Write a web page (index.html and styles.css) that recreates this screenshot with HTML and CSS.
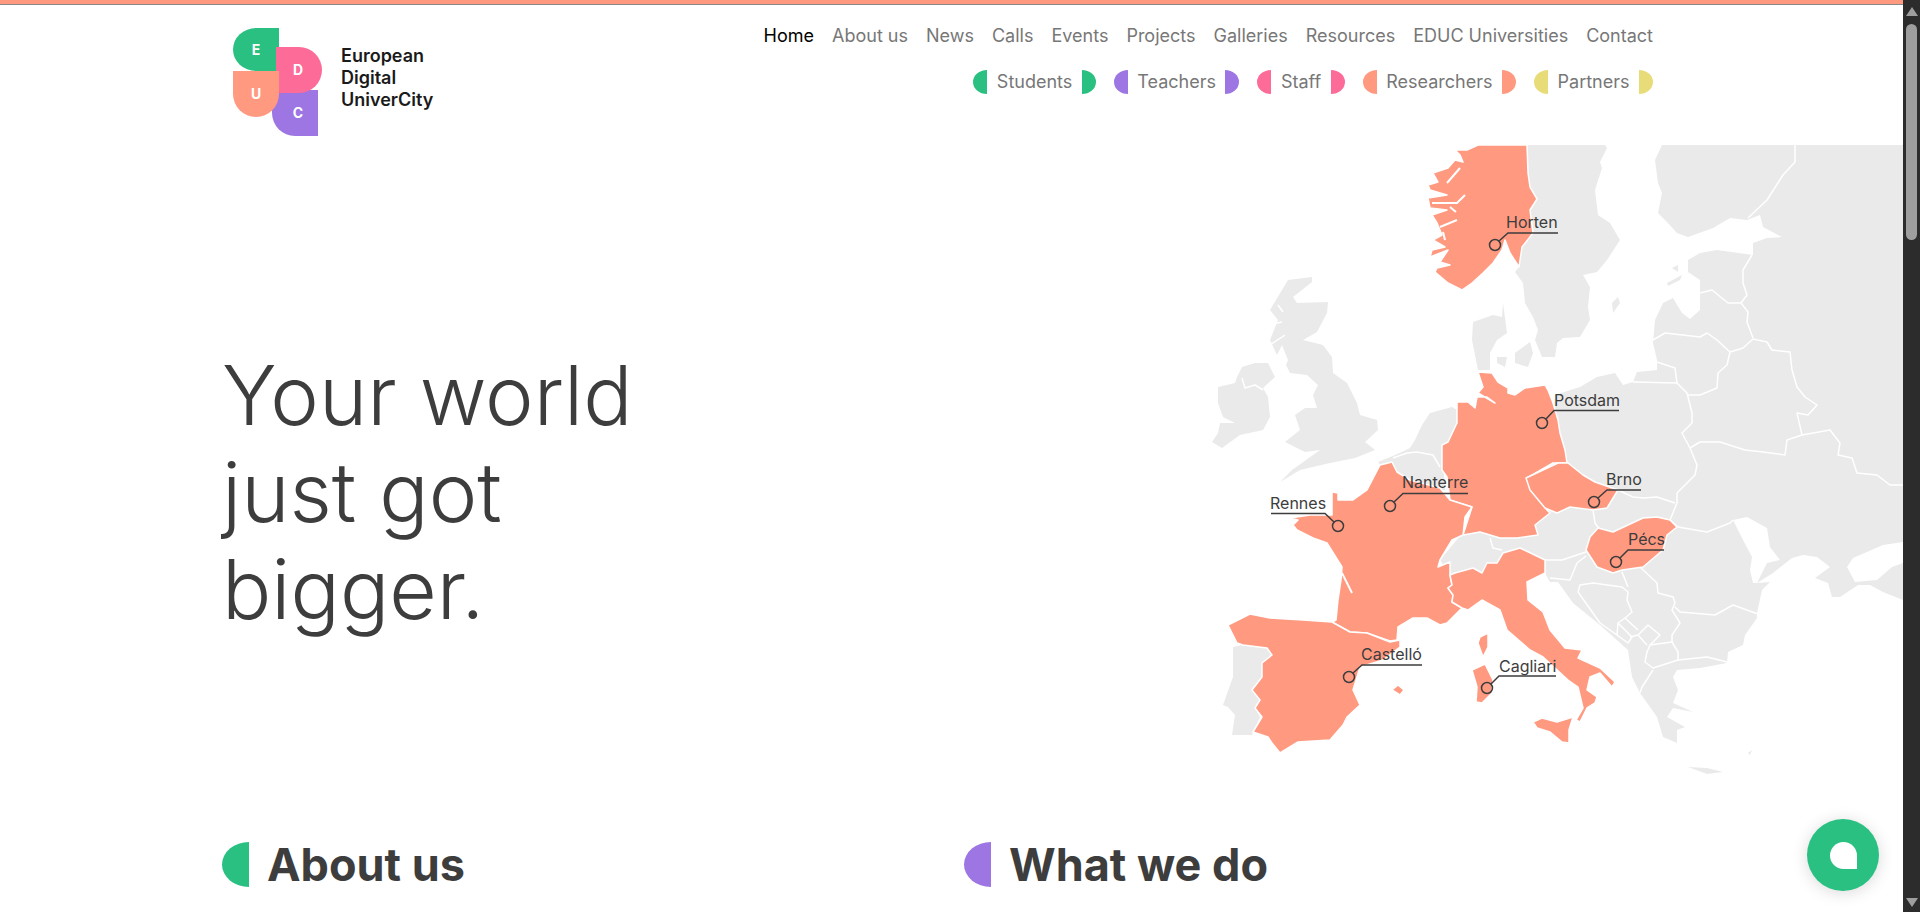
FILE: index.html
```html
<!DOCTYPE html>
<html lang="en">
<head>
    <meta charset="UTF-8">
    <meta name="viewport" content="width=device-width, initial-scale=1.0">
    <title>European Digital UniverCity</title>
    <link rel="stylesheet" href="styles.css">
</head>
<body>
    <div class="page">
        <main class="content">
            <header class="site-header">
                <a class="logo" href="#">
                    <svg class="logo-mark" viewBox="233 28 90 108" width="90" height="108">
                        <path class="green" d="M279 28H256a23 21.500 0 0 0 0 43H279Z"/>
                        <path class="purple" d="M272 90V113a23 23 0 0 0 23 23H318V90Z"/>
                        <path class="pink" d="M276 47H299a23 23 0 0 1 0 46H276Z"/>
                        <path class="salmon" d="M233 71V94a23 23 0 0 0 23 23a23 23 0 0 0 23 -23V71Z"/>
                        <text x="256" y="55">E</text>
                        <text x="298" y="75">D</text>
                        <text x="256" y="99">U</text>
                        <text x="298" y="118">C</text>
                    </svg>
                    <span class="logo-text">European<br>Digital<br>UniverCity</span>
                </a>
                <nav class="site-nav">
                    <ul class="main-menu">
                        <li><a class="active" href="#">Home</a></li>
                        <li><a href="#">About us</a></li>
                        <li><a href="#">News</a></li>
                        <li><a href="#">Calls</a></li>
                        <li><a href="#">Events</a></li>
                        <li><a href="#">Projects</a></li>
                        <li><a href="#">Galleries</a></li>
                        <li><a href="#">Resources</a></li>
                        <li><a href="#">EDUC Universities</a></li>
                        <li><a href="#">Contact</a></li>
                    </ul>
                    <ul class="audience-menu">
                        <li class="green"><a href="#">Students</a></li>
                        <li class="purple"><a href="#">Teachers</a></li>
                        <li class="pink"><a href="#">Staff</a></li>
                        <li class="salmon"><a href="#">Researchers</a></li>
                        <li class="yellow"><a href="#">Partners</a></li>
                    </ul>
                </nav>
            </header>

            <section class="hero">
                <h1>Your world<br>just got<br>bigger.</h1>
                <svg class="map" viewBox="1200 145 703 645" width="703" height="645">
                    <g class="land">
                        <!-- sweden -->
                        <path d="M1527 145L1528 173L1530 187L1537 199L1530 210L1533 233L1522 247L1519 267L1515 272L1523 283L1525 303L1533 317L1538 330L1535 340L1542 357L1555 357L1557 343L1563 338L1580 337L1590 320L1588 307L1590 287L1583 275L1597 272L1607 260L1620 240L1610 223L1598 215L1595 190L1602 168L1600 162L1607 148L1605 145Z"/>
                        <!-- finland, baltics, east and the balkans, one mass -->
                        <path d="M1662 145L1655 160L1658 183L1662 193L1658 213L1667 222L1677 233L1688 237L1713 228L1730 218L1747 220L1760 215L1763 227L1782 237L1767 238L1753 243L1753 255L1717 250L1700 253L1688 260L1688 272L1700 280L1700 310L1690 319L1682 313L1673 298L1663 303L1655 320L1653 343L1657 360L1657 370L1637 372L1633 382L1623 385L1615 373L1597 377L1580 387L1555 395L1550 470L1465 530L1440 560L1450 575L1500 580L1530 575L1545 573L1550 582L1558 582L1573 603L1600 625L1628 650L1632 677L1640 693L1650 707L1657 717L1663 737L1677 743L1677 730L1685 727L1667 717L1673 708L1693 712L1673 703L1678 690L1673 677L1677 670L1700 668L1727 663L1728 652L1743 645L1745 635L1757 618L1757 613L1762 590L1770 582L1757 583L1773 573L1792 558L1803 555L1817 557L1830 567L1815 578L1828 583L1832 597L1840 597L1858 585L1870 585L1883 592L1903 600V145Z"/>
                        <!-- gotland, saaremaa, hiiumaa -->
                        <path d="M1618 297L1620 303L1613 313L1612 303Z"/>
                        <path d="M1667 283L1682 275L1680 280L1668 286Z"/>
                        <path d="M1672 268L1678 265L1678 272Z"/>
                        <!-- denmark -->
                        <path d="M1503 303L1502 317L1493 315L1473 322L1472 340L1478 370L1490 370L1490 353L1497 340L1507 333Z"/>
                        <path d="M1515 353L1530 342L1533 353L1528 367L1515 363Z"/>
                        <path d="M1497 357L1507 357L1505 367L1497 363Z"/>
                        <!-- britain -->
                        <path d="M1288 280L1312 277L1312 282L1293 297L1297 303L1328 302L1327 313L1317 332L1303 340L1323 345L1332 357L1333 373L1347 383L1357 403L1360 415L1377 420L1378 430L1365 442L1375 450L1355 458L1330 463L1300 470L1280 482L1292 470L1320 450L1305 452L1285 442L1300 430L1295 415L1305 408L1317 408L1313 395L1318 385L1307 375L1290 373L1286 365L1288 360L1282 345L1277 355L1270 340L1278 320L1270 310L1282 290Z"/>
                        <!-- ireland -->
                        <path d="M1218 387L1235 383L1237 377L1242 367L1255 363L1268 363L1275 377L1263 388L1268 397L1270 417L1263 430L1240 435L1222 448L1212 442L1218 433L1220 423L1235 423L1223 417L1218 403Z"/>
                        <!-- benelux -->
                        <path d="M1430 413L1452 407L1457 410L1457 423L1448 442L1442 448L1445 490L1400 490L1378 462L1395 455L1410 448L1415 440L1422 425Z"/>
                        <!-- portugal -->
                        <path d="M1233 647L1243 645L1267 648L1272 655L1262 663L1262 677L1252 690L1260 700L1255 708L1260 717L1252 735L1232 735L1235 715L1228 707L1223 705L1233 677Z"/>
                        <!-- crete, rhodes -->
                        <path d="M1688 767L1707 768L1723 772L1707 774Z"/>
                        <path d="M1748 753L1752 750L1750 755Z"/>
                    </g>
                    <g class="sea">
                        <path d="M1733 520L1747 517L1767 528L1770 547L1780 560L1767 563L1757 583L1753 583L1750 570L1752 557L1743 540Z"/>
                        <path d="M1847 567L1853 558L1883 545L1903 542V563L1892 567L1877 580L1855 582Z"/>
                    </g>
                    <g class="borders">
                        <path d="M1795 145L1795 162L1783 175L1767 200L1748 218"/>
                        <path d="M1752 255L1743 270L1743 283L1747 295L1741 303"/>
                        <path d="M1700 293L1712 290L1728 303L1741 303L1748 312L1747 322L1753 338"/>
                        <path d="M1653 340L1665 333L1700 337L1707 333L1717 340L1730 352L1743 348L1753 339L1767 342L1772 350L1790 352L1792 370L1797 387L1805 397L1817 405L1808 415L1797 413L1802 435"/>
                        <path d="M1730 352L1727 365L1718 373L1717 388L1700 395L1688 395"/>
                        <path d="M1657 362L1675 368L1677 383L1633 382"/>
                        <path d="M1677 383L1687 393L1692 413L1692 423L1682 433L1690 448L1697 465L1695 475L1677 493L1677 503L1670 520"/>
                        <path d="M1690 448L1700 442L1720 442L1745 450L1763 452L1785 455L1787 440L1802 435L1830 430L1840 443L1838 455L1852 458L1857 473L1877 475L1890 485L1903 485"/>
                        <path d="M1618 490L1633 497L1643 498L1657 497L1675 503"/>
                        <path d="M1593 510L1595 523L1600 530"/>
                        <path d="M1670 520L1678 527L1707 532L1730 523L1733 520"/>
                        <path d="M1640 567L1657 583L1658 593L1673 597L1675 603L1672 610L1680 623L1672 635L1672 642"/>
                        <path d="M1675 607L1680 612L1715 615L1733 605L1758 614"/>
                        <path d="M1647 652L1650 645L1672 642L1678 652L1678 660L1653 668L1645 662Z"/>
                        <path d="M1678 660L1707 657L1727 662"/>
                        <path d="M1653 670L1642 687L1640 693"/>
                        <path d="M1630 637L1638 635L1647 645M1638 635L1648 625L1660 635L1650 645"/>
                        <path d="M1628 643L1632 637L1618 623L1617 635L1628 643M1625 618L1638 630"/>
                        <path d="M1578 592L1580 585L1593 583L1622 587L1628 592L1627 600L1632 612L1625 618L1618 623M1578 592L1600 623L1617 635"/>
                        <path d="M1545 560L1562 560L1586 552M1550 578L1570 580L1577 563L1586 556"/>
                        <path d="M1622 572L1628 587"/>
                        <path d="M1490 538L1493 548L1502 550"/>
                        <path d="M1242 378L1245 388L1255 385L1263 390"/>
                        <path d="M1393 458L1407 453L1417 452L1433 455L1440 467"/>
                        <!-- scottish lochs -->
                        <path d="M1268 325L1282 322M1270 345L1285 335M1278 305L1283 312"/>
                    </g>
                    <g class="educ">
                        <!-- norway -->
                        <path d="M1478 145H1527L1528 173L1530 187L1537 199L1530 210L1533 233L1522 247L1519 267L1510 253L1505 240L1502 250L1493 263L1483 273L1472 283L1462 290L1448 283L1435 272L1437 268L1450 265L1440 262L1448 250L1430 257L1432 250L1445 247L1433 240L1442 235L1437 223L1432 215L1447 210L1430 208L1428 198L1447 195L1430 190L1428 185L1438 182L1433 173L1448 168L1455 160L1463 162L1460 155L1455 150L1467 150Z"/>
                        <!-- germany -->
                        <path d="M1478 372L1492 373L1498 382L1508 388L1508 393L1515 395L1525 388L1545 385L1548 390L1553 403L1558 420L1560 433L1565 450L1567 463L1553 463L1527 478L1532 490L1547 510L1550 513L1535 525L1538 535L1517 538L1500 538L1480 532L1463 535L1472 507L1450 500L1447 477L1442 470L1442 445L1448 442L1457 423L1457 402L1468 402L1475 408L1477 397L1487 397L1495 403L1478 393L1483 387Z"/>
                        <!-- france -->
                        <path d="M1332 492L1338 493L1338 500L1353 500L1367 490L1380 465L1392 462L1397 472L1410 480L1440 488L1450 500L1472 507L1465 517L1463 535L1452 540L1440 560L1438 567L1450 562L1450 575L1452 585L1448 588L1453 595L1452 602L1462 608L1447 623L1440 625L1427 618L1413 618L1398 627L1397 640L1390 641L1367 633L1350 632L1332 622L1336 620L1338 600L1341 580L1342 567L1327 543L1313 538L1297 530L1293 525L1298 520L1290 518L1310 515L1332 515Z"/>
                        <!-- spain and the balearics -->
                        <path d="M1228 625L1250 614L1270 618L1303 620L1332 622L1350 632L1367 633L1390 642L1400 640L1400 647L1383 660L1360 667L1357 677L1353 690L1360 705L1347 717L1343 725L1330 740L1298 742L1280 753L1272 743L1268 737L1253 732L1262 717L1255 708L1260 700L1252 690L1262 677L1262 663L1272 655L1267 648L1243 645L1237 643L1232 633Z"/>
                        <path d="M1392 690L1398 685L1404 690L1400 695Z"/>
                        <!-- italy -->
                        <path d="M1450 575L1455 573L1473 568L1482 573L1487 563L1497 563L1503 553L1520 548L1545 560L1545 573L1527 582L1528 600L1543 612L1550 630L1565 648L1582 650L1578 658L1600 668L1615 682L1612 687L1600 673L1590 677L1587 690L1597 697L1595 703L1587 708L1580 722L1576 720L1583 708L1578 687L1568 680L1543 657L1530 650L1507 630L1500 610L1482 600L1468 610L1462 608L1452 602L1453 595L1448 588L1452 585Z"/>
                        <path d="M1533 722L1542 718L1557 722L1573 717L1569 730L1569 743L1562 742L1550 732L1537 728Z"/>
                        <path d="M1472 670L1485 664L1493 680L1492 693L1482 703L1476 702L1477 687Z"/>
                        <path d="M1480 637L1488 633L1488 647L1483 657L1478 643Z"/>
                        <!-- czechia -->
                        <path d="M1526 478L1558 463L1568 463L1583 475L1595 482L1618 490L1607 508L1593 510L1570 507L1557 513L1545 508L1530 490Z"/>
                        <!-- hungary -->
                        <path d="M1598 528L1613 532L1643 518L1657 517L1670 520L1677 527L1667 535L1663 550L1643 567L1622 570L1613 573L1597 567L1586 550L1590 537Z"/>
                    </g>
                    <g class="borders fjords">
                        <path d="M1432 203L1457 203L1465 195M1450 207L1456 212"/>
                        <path d="M1440 227L1457 220"/>
                        <path d="M1447 183L1460 168"/>
                        <path d="M1445 240L1443 232"/>
                        <path d="M1342 573L1352 593"/>
                    </g>
                    <g class="pin">
                        <text x="1506" y="228">Horten</text>
                        <path d="M1558 233H1508L1499 241"/>
                        <circle cx="1495" cy="245" r="5.500"/>
                    </g>
                    <g class="pin">
                        <text x="1554" y="406">Potsdam</text>
                        <path d="M1619 410.500H1554L1546 419"/>
                        <circle cx="1542" cy="423" r="5.500"/>
                    </g>
                    <g class="pin">
                        <text x="1402" y="488">Nanterre</text>
                        <path d="M1468 493.500H1403L1394 502"/>
                        <circle cx="1390" cy="506" r="5.500"/>
                    </g>
                    <g class="pin">
                        <text x="1270" y="509">Rennes</text>
                        <path d="M1271 513.500H1325L1334 522"/>
                        <circle cx="1338" cy="526" r="5.500"/>
                    </g>
                    <g class="pin">
                        <text x="1606" y="485">Brno</text>
                        <path d="M1641 490H1607L1598 498"/>
                        <circle cx="1594" cy="502" r="5.500"/>
                    </g>
                    <g class="pin">
                        <text x="1628" y="545">Pécs</text>
                        <path d="M1664 550H1628L1620 558"/>
                        <circle cx="1616" cy="562" r="5.500"/>
                    </g>
                    <g class="pin">
                        <text x="1361" y="660">Castelló</text>
                        <path d="M1422 665H1362L1353 673"/>
                        <circle cx="1349" cy="677" r="5.500"/>
                    </g>
                    <g class="pin">
                        <text x="1499" y="672">Cagliari</text>
                        <path d="M1556 676H1499L1491 684"/>
                        <circle cx="1487" cy="688" r="5.500"/>
                    </g>
                </svg>
            </section>

            <section class="intro">
                <h2 class="green">About us</h2>
                <h2 class="purple">What we do</h2>
            </section>

            <button class="chat-button" aria-label="Chat"><span class="chat-icon"></span></button>
        </main>

        <aside class="scrollbar">
            <span class="arrow-up"></span>
            <span class="thumb"></span>
            <span class="arrow-down"></span>
        </aside>
    </div>
</body>
</html>
```

FILE: styles.css
```css
* {
    box-sizing: border-box;
}
html, body {
    height: 100%;
    margin: 0;
    overflow: hidden;
}
body {
    font-family: "Inter", "Liberation Sans", sans-serif;
    color: #3d3d3d;
    background-color: #ffffff;
}
a {
    color: inherit;
    text-decoration: none;
}
ul {
    list-style: none;
    margin: 0;
    padding: 0;
}
.page {
    display: flex;
    height: 912px;
}
.content {
    position: relative;
    flex: 1;
    min-width: 0;
    overflow: hidden;
    border-top: 4px solid #ff9980;
    box-shadow: inset 0 1px 0 #888;
}

/* header */
.site-header {
    display: flex;
    justify-content: space-between;
    height: 141px;
    padding: 0 250px 0 233px;
}
.logo {
    display: flex;
    align-items: center;
    gap: 18px;
    align-self: flex-start;
    margin-top: 24px;
}
.logo-mark {
    display: block;
}
.logo-mark .green { fill: #2ac081; }
.logo-mark .purple { fill: #9d76e3; }
.logo-mark .pink { fill: #fd6b99; }
.logo-mark .salmon { fill: #ff9980; }
.logo-mark text {
    fill: #ffffff;
    font-size: 14px;
    font-weight: 700;
    text-anchor: middle;
}
.logo-text {
    margin-bottom: 8px;
    font-size: 18px;
    font-weight: 600;
    line-height: 22px;
    color: #1a1a1a;
}
.site-nav {
    display: flex;
    flex-direction: column;
    align-items: flex-end;
    gap: 22px;
    padding-top: 20px;
}
.main-menu {
    display: flex;
    gap: 18px;
    font-size: 18px;
    line-height: 24px;
    color: #777777;
}
.main-menu .active {
    color: #000000;
}
.audience-menu {
    display: flex;
    gap: 18px;
    font-size: 18px;
    line-height: 24px;
    color: #777777;
}
.audience-menu li {
    display: flex;
    align-items: center;
    gap: 9.500px;
}
.audience-menu li::before,
.audience-menu li::after {
    content: "";
    width: 14px;
    height: 24px;
    background-color: currentColor;
}
.audience-menu li::before {
    border-radius: 100% 0 0 100% / 50% 0 0 50%;
}
.audience-menu li::after {
    border-radius: 0 100% 100% 0 / 0 50% 50% 0;
}
.audience-menu a {
    color: #777777;
}
.audience-menu .green { color: #2ac081; }
.audience-menu .purple { color: #9d76e3; }
.audience-menu .pink { color: #fd6b99; }
.audience-menu .salmon { color: #ff9980; }
.audience-menu .yellow { color: #e8dc78; }

/* hero with the map */
.hero {
    display: flex;
    justify-content: space-between;
    align-items: flex-start;
    padding-left: 222px;
}
.hero h1 {
    margin: 202px 0 0;
    font-size: 82px;
    font-weight: 300;
    line-height: 97px;
    color: #3d3d3d;
}
.map {
    display: block;
    flex-shrink: 0;
}
.land path {
    fill: #eaeaea;
}
.sea path {
    fill: #ffffff;
}
.borders path {
    fill: none;
    stroke: #ffffff;
    stroke-width: 1.500;
    stroke-linejoin: round;
}
.fjords path {
    stroke-width: 2;
}
.educ path {
    fill: #ff9980;
    stroke: #ffffff;
    stroke-width: 1.500;
    stroke-linejoin: round;
}
.pin text {
    fill: #3d3d3d;
    font-size: 16px;
}
.pin path,
.pin circle {
    fill: none;
    stroke: #3d3d3d;
    stroke-width: 1.500;
}

/* sections under the hero */
.intro {
    display: grid;
    grid-template-columns: 690px 690px;
    gap: 52px;
    padding: 52px 0 0 222px;
}
.intro h2 {
    display: flex;
    align-items: center;
    gap: 18px;
    margin: 0;
    font-size: 45px;
    font-weight: 700;
    line-height: 45px;
    color: #3d3d3d;
}
.intro h2::before {
    content: "";
    width: 27px;
    height: 45px;
    border-radius: 100% 0 0 100% / 50% 0 0 50%;
}
.intro .green::before { background-color: #2ac081; }
.intro .purple::before { background-color: #9d76e3; }

.chat-button {
    position: absolute;
    left: 1807px;
    top: 815px;
    display: flex;
    align-items: center;
    justify-content: center;
    width: 72px;
    height: 72px;
    padding: 0;
    border: none;
    border-radius: 50%;
    background-color: #2ac081;
    box-shadow: 0 2px 16px rgba(0, 0, 0, 0.15);
}
.chat-icon {
    width: 27px;
    height: 27px;
    border-radius: 50% 50% 0 50%;
    background-color: #ffffff;
}

.scrollbar {
    display: flex;
    flex-direction: column;
    align-items: center;
    flex: 0 0 17px;
    background-color: #2c2c2c;
}
.arrow-up,
.arrow-down {
    width: 0;
    height: 0;
    border-left: 6px solid transparent;
    border-right: 6px solid transparent;
}
.arrow-up {
    margin-top: 7px;
    border-bottom: 9px solid #9e9e9e;
}
.thumb {
    width: 11px;
    height: 216px;
    margin-top: 8px;
    border-radius: 6px;
    background-color: #9e9e9e;
}
.arrow-down {
    margin-top: auto;
    margin-bottom: 5px;
    border-top: 9px solid #9e9e9e;
}
```
